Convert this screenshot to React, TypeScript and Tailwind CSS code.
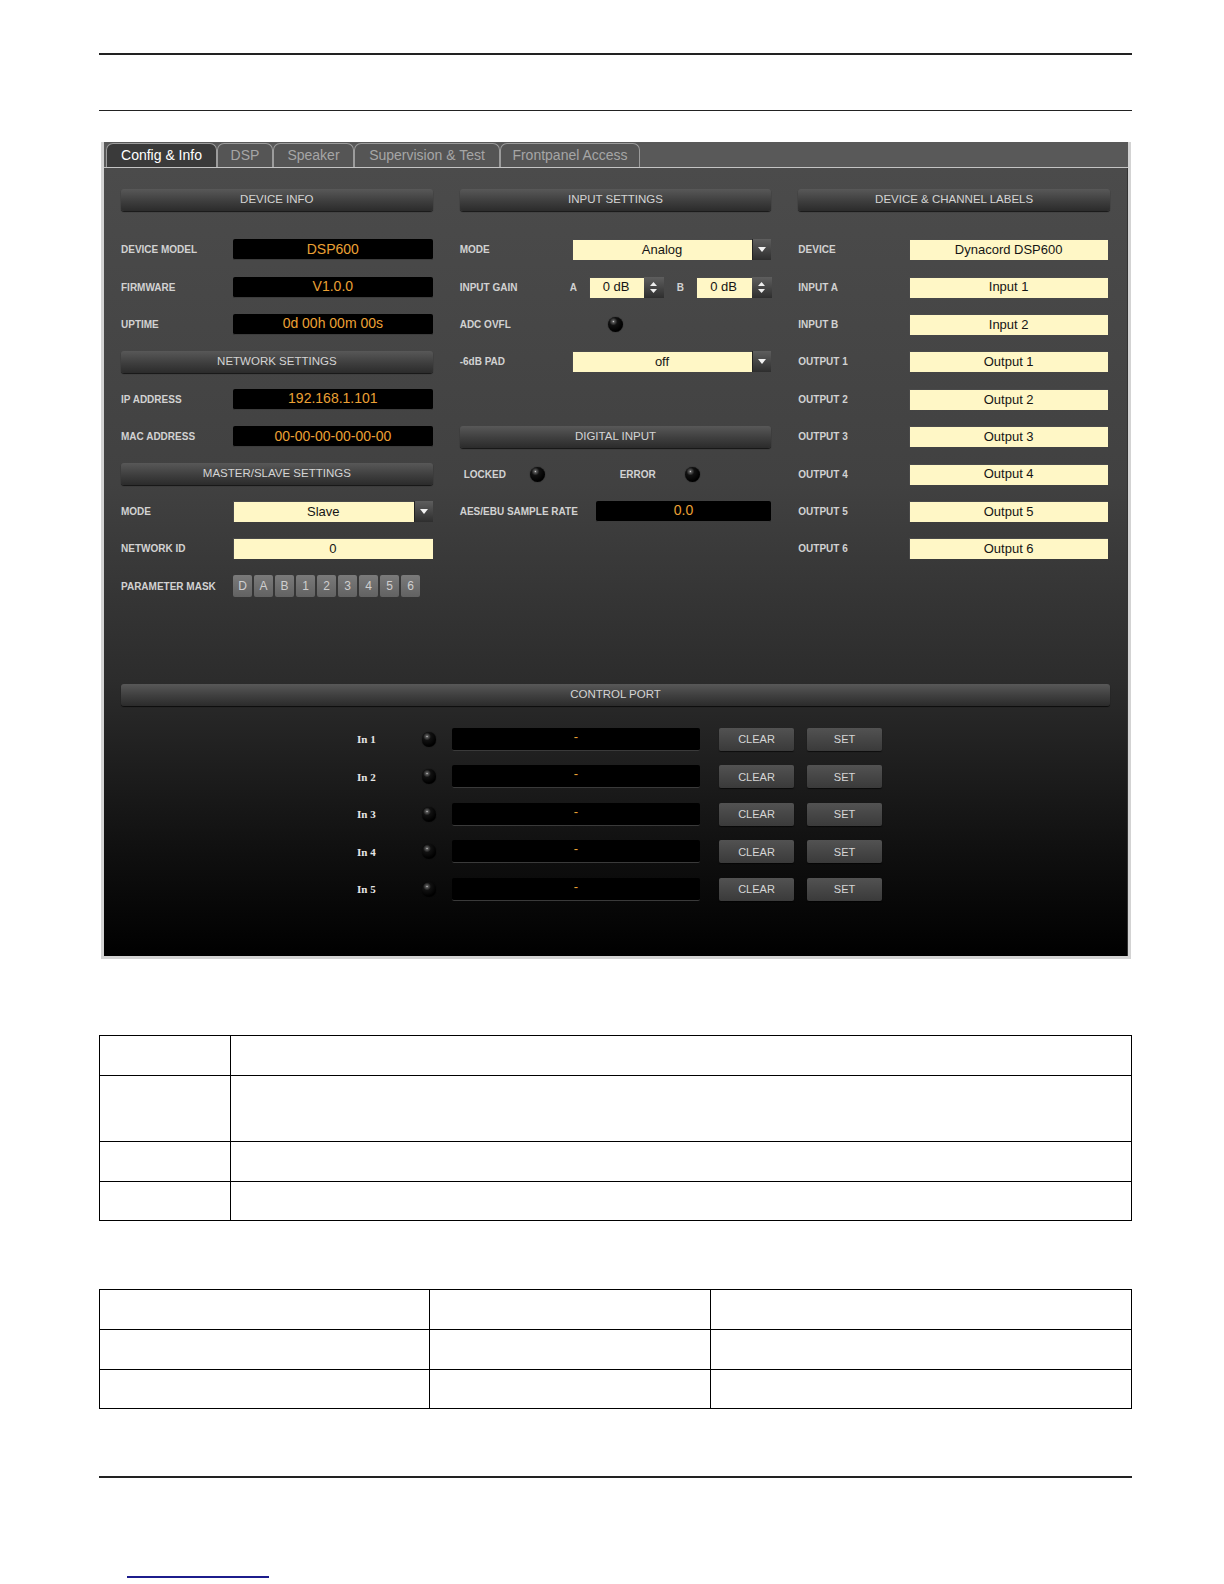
import React from 'react';

const Header = ({ children }: { children: React.ReactNode }) => (
  <div className="h-[22px] w-full rounded-[3px] bg-[linear-gradient(to_bottom,#585858_0%,#3e3e3e_55%,#2b2b2b_100%)] shadow-[0_1px_1px_rgba(0,0,0,0.7)] flex items-center justify-center text-[11.5px] text-[#d4d4d4]">
    {children}
  </div>
);

const Slot = ({ children }: { children: React.ReactNode }) => (
  <div className="h-[37.4px] flex items-center">{children}</div>
);

const Row = ({ label, labelW = 'w-[112px]', children }: { label: string; labelW?: string; children: React.ReactNode }) => (
  <Slot>
    <div className={`${labelW} shrink-0 text-[10px] font-bold text-[#d2d2d2]`}>{label}</div>
    <div className="flex-1 flex items-center">{children}</div>
  </Slot>
);

const BlackBox = ({ value }: { value: string }) => (
  <div className="h-[21px] flex-1 rounded-[2px] bg-black border-b border-[#3c3c3c] flex items-center justify-center text-[14px] text-[#eba035]">
    {value}
  </div>
);

const YellowBox = ({ value, className = 'flex-1' }: { value: string; className?: string }) => (
  <div className={`${className} h-[21px] bg-[#fff7c6] shadow-[inset_1px_1px_0_#4a4a4a] flex items-center justify-center text-[13px] text-[#151515]`}>
    {value}
  </div>
);

const ArrowBtn = () => (
  <div className="w-[19px] h-[21px] shrink-0 bg-[linear-gradient(to_bottom,#5e5e5e,#2e2e2e)] border-l border-[#222] flex items-center justify-center">
    <svg width="8" height="5" viewBox="0 0 8 5">
      <path d="M0 0 L8 0 L4 5 Z" fill="#f2f2f2" />
    </svg>
  </div>
);

const Dropdown = ({ value }: { value: string }) => (
  <div className="flex-1 flex">
    <YellowBox value={value} />
    <ArrowBtn />
  </div>
);

const Spin = () => (
  <div className="w-[20px] h-[21px] shrink-0 bg-[linear-gradient(to_bottom,#5e5e5e,#2e2e2e)] flex flex-col items-center justify-center gap-[3px]">
    <svg width="7" height="4" viewBox="0 0 7 4">
      <path d="M0 4 L7 4 L3.5 0 Z" fill="#eeeeee" />
    </svg>
    <svg width="7" height="4" viewBox="0 0 7 4">
      <path d="M0 0 L7 0 L3.5 4 Z" fill="#eeeeee" />
    </svg>
  </div>
);

const Led = ({ size = 'w-[15px] h-[15px]' }: { size?: string }) => (
  <div className={`${size} shrink-0 rounded-full bg-[radial-gradient(circle_at_36%_30%,#d0d0d0_0%,#5a5a5a_8%,#111_28%,#000_70%)] shadow-[0_0_1px_#000]`} />
);

const tabs = [
  { name: 'Config & Info', w: 'w-[111px]', active: true },
  { name: 'DSP', w: 'w-[56px]', active: false },
  { name: 'Speaker', w: 'w-[81px]', active: false },
  { name: 'Supervision & Test', w: 'w-[146px]', active: false },
  { name: 'Frontpanel Access', w: 'w-[140px]', active: false },
];

const maskKeys = ['D', 'A', 'B', '1', '2', '3', '4', '5', '6'];

const labels = [
  ['DEVICE', 'Dynacord DSP600'],
  ['INPUT A', 'Input 1'],
  ['INPUT B', 'Input 2'],
  ['OUTPUT 1', 'Output 1'],
  ['OUTPUT 2', 'Output 2'],
  ['OUTPUT 3', 'Output 3'],
  ['OUTPUT 4', 'Output 4'],
  ['OUTPUT 5', 'Output 5'],
  ['OUTPUT 6', 'Output 6'],
];

const CtrlButton = ({ text }: { text: string }) => (
  <div className="w-[75px] h-[23px] shrink-0 rounded-[2px] bg-[linear-gradient(to_bottom,#525252,#3a3a3a)] shadow-[0_1px_1px_rgba(0,0,0,0.6)] flex items-center justify-center text-[11px] text-[#d6d6d6]">
    {text}
  </div>
);

const App = () => {
  return (
    <div className="w-[1224px] h-[1584px] bg-white font-['Liberation_Sans',Arial,sans-serif]">
      <div className="ml-[99px] w-[1033px] pt-[53px]">
        <div className="h-[1.5px] bg-[#222]" />
        <div className="h-[1.5px] bg-[#222] mt-[55px]" />

        {/* screenshot frame */}
        <div className="mt-[31px] ml-[2px] w-[1030px] border-x-[3px] border-b-[3px] border-[#d3d3d3] bg-[#595959]">
          <div className="h-[25px] flex items-end pl-[2px]">
            {tabs.map((t) => (
              <div
                key={t.name}
                className={`${t.w} h-[24px] rounded-t-[7px] border border-b-0 border-[#9c9c9c] flex items-center justify-center text-[14px] ${
                  t.active ? 'bg-[#3a3a3a] text-white' : 'bg-[#555555] text-[#a6a6a6]'
                }`}
              >
                {t.name}
              </div>
            ))}
          </div>
          <div className="h-px bg-[#c4c4c4]" />

          <div className="h-[788px] px-[17px] pt-[21px] border-r border-[#333] bg-[linear-gradient(to_bottom,#4b4b4b_0%,#414141_40%,#2c2c2c_65%,#0e0e0e_88%,#000_100%)]">
            <div className="grid grid-cols-3 gap-x-[27px]">
              {/* device info column */}
              <div className="flex flex-col">
                <Header>DEVICE INFO</Header>
                <div className="h-[20px]" />
                <Row label="DEVICE MODEL"><BlackBox value="DSP600" /></Row>
                <Row label="FIRMWARE"><BlackBox value="V1.0.0" /></Row>
                <Row label="UPTIME"><BlackBox value="0d 00h 00m 00s" /></Row>
                <Slot><Header>NETWORK SETTINGS</Header></Slot>
                <Row label="IP ADDRESS"><BlackBox value="192.168.1.101" /></Row>
                <Row label="MAC ADDRESS"><BlackBox value="00-00-00-00-00-00" /></Row>
                <Slot><Header>MASTER/SLAVE SETTINGS</Header></Slot>
                <Row label="MODE"><Dropdown value="Slave" /></Row>
                <Row label="NETWORK ID"><YellowBox value="0" /></Row>
                <Row label="PARAMETER MASK">
                  <div className="flex gap-[2px]">
                    {maskKeys.map((k) => (
                      <div
                        key={k}
                        className="w-[19px] h-[22px] rounded-[2px] bg-[linear-gradient(to_bottom,#7a7a7a,#626262)] flex items-center justify-center text-[12px] text-[#cfcfcf]"
                      >
                        {k}
                      </div>
                    ))}
                  </div>
                </Row>
              </div>

              {/* input settings column */}
              <div className="flex flex-col">
                <Header>INPUT SETTINGS</Header>
                <div className="h-[20px]" />
                <Row label="MODE"><Dropdown value="Analog" /></Row>
                <Row label="INPUT GAIN">
                  <span className="w-[17px] text-[10px] font-bold text-[#d2d2d2] -ml-[2px]">A</span>
                  <YellowBox value="0 dB" className="w-[55px] ml-[2px]" />
                  <Spin />
                  <span className="w-[19px] ml-[13px] text-[10px] font-bold text-[#d2d2d2]">B</span>
                  <YellowBox value="0 dB" className="w-[56px]" />
                  <Spin />
                </Row>
                <Row label="ADC OVFL">
                  <div className="ml-[36px]"><Led /></div>
                </Row>
                <Row label="-6dB PAD"><Dropdown value="off" /></Row>
                <Slot><span /></Slot>
                <Slot><Header>DIGITAL INPUT</Header></Slot>
                <Slot>
                  <span className="pl-[4px] w-[70px] text-[10px] font-bold text-[#d2d2d2]">LOCKED</span>
                  <Led />
                  <span className="ml-[75px] w-[65px] text-[10px] font-bold text-[#d2d2d2]">ERROR</span>
                  <Led />
                </Slot>
                <Row label="AES/EBU SAMPLE RATE" labelW="w-[136px]"><BlackBox value="0.0" /></Row>
              </div>

              {/* labels column */}
              <div className="flex flex-col">
                <Header>DEVICE &amp; CHANNEL LABELS</Header>
                <div className="h-[20px]" />
                {labels.map(([l, v]) => (
                  <Row key={l} label={l} labelW="w-[111px]">
                    <YellowBox value={v} className="flex-1 mr-[2px]" />
                  </Row>
                ))}
              </div>
            </div>

            {/* control port */}
            <div className="mt-[79px]">
              <Header>CONTROL PORT</Header>
              <div className="mt-[15px]">
                {[1, 2, 3, 4, 5].map((n) => (
                  <div key={n} className="h-[37.4px] flex items-center pl-[236px]">
                    <span className="w-[65px] shrink-0 font-['Liberation_Serif',serif] font-bold text-[11px] text-[#e6e6e6]">In {n}</span>
                    <Led size="w-[14px] h-[15px]" />
                    <div className="ml-[16px] w-[248px] h-[23px] shrink-0 rounded-[2px] bg-black border-b border-[#3a3a3a] flex justify-center pt-[2px] text-[13px] leading-none text-[#eba035]">
                      -
                    </div>
                    <div className="ml-[19px]"><CtrlButton text="CLEAR" /></div>
                    <div className="ml-[13px]"><CtrlButton text="SET" /></div>
                  </div>
                ))}
              </div>
            </div>
          </div>
        </div>

        {/* first table */}
        <table className="mt-[76px] w-[1033px] border-collapse">
          <tbody>
            {['h-[40px]', 'h-[66px]', 'h-[40px]', 'h-[39px]'].map((h, i) => (
              <tr key={i} className={h}>
                <td className="w-[131px] border border-black" />
                <td className="border border-black" />
              </tr>
            ))}
          </tbody>
        </table>

        {/* second table */}
        <table className="mt-[68px] w-[1033px] border-collapse">
          <tbody>
            {['h-[40px]', 'h-[40px]', 'h-[39px]'].map((h, i) => (
              <tr key={i} className={h}>
                <td className="w-[330px] border border-black" />
                <td className="w-[281px] border border-black" />
                <td className="border border-black" />
              </tr>
            ))}
          </tbody>
        </table>

        <div className="h-[1.5px] bg-[#222] mt-[67px]" />
        <div className="h-[2px] w-[142px] ml-[28px] mt-[98px] bg-[#1c1c8c]" />
      </div>
    </div>
  );
};

export default App;
